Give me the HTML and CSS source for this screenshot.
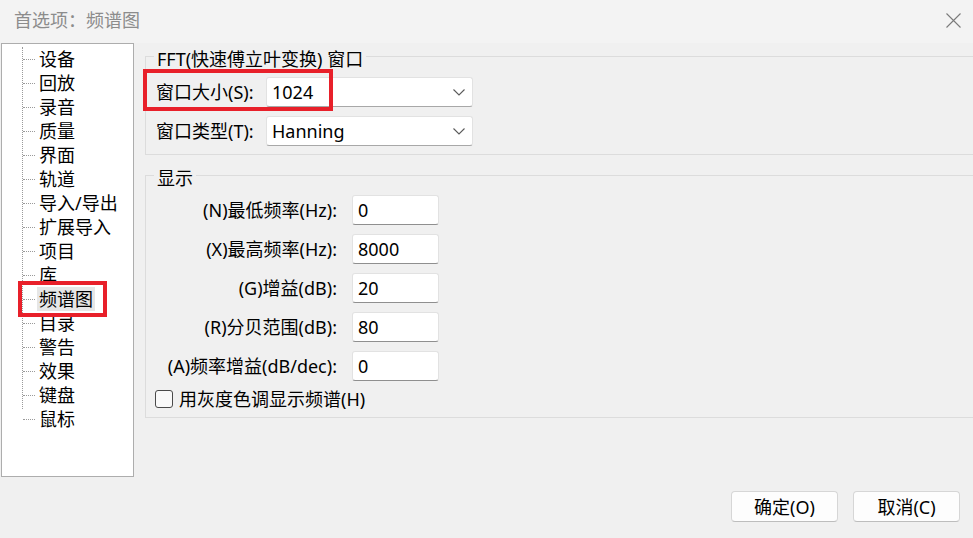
FILE: index.html
```html
<!DOCTYPE html>
<html lang="zh-CN">
<head>
<meta charset="utf-8">
<title>首选项：频谱图</title>
<link rel="stylesheet" href="styles.css">
</head>
<body>
<div class="titlebar">
  <span class="title">首选项：频谱图</span>
  <svg class="close" width="15" height="15" viewBox="0 0 15 15"><path d="M0.5 0.5 L14.5 14.5 M14.5 0.5 L0.5 14.5" stroke="#7a7a7a" stroke-width="1.1" fill="none"/></svg>
</div>
<div class="main">
  <div class="tree">
    <div class="trunk">
      <ul class="items">
        <li><span class="twig"></span><span class="label">设备</span></li>
        <li><span class="twig"></span><span class="label">回放</span></li>
        <li><span class="twig"></span><span class="label">录音</span></li>
        <li><span class="twig"></span><span class="label">质量</span></li>
        <li><span class="twig"></span><span class="label">界面</span></li>
        <li><span class="twig"></span><span class="label">轨道</span></li>
        <li><span class="twig"></span><span class="label">导入/导出</span></li>
        <li><span class="twig"></span><span class="label">扩展导入</span></li>
        <li><span class="twig"></span><span class="label">项目</span></li>
        <li><span class="twig"></span><span class="label">库</span></li>
        <li><span class="twig"></span><span class="label selected">频谱图</span></li>
        <li><span class="twig"></span><span class="label">目录</span></li>
        <li><span class="twig"></span><span class="label">警告</span></li>
        <li><span class="twig"></span><span class="label">效果</span></li>
        <li><span class="twig"></span><span class="label">键盘</span></li>
        <li><span class="twig"></span><span class="label">鼠标</span></li>
      </ul>
    </div>
  </div>
  <div class="panel">
    <div class="group group-fft">
      <div class="legend">FFT(快速傅立叶变换) 窗口</div>
      <div class="row first">
        <span class="rlabel">窗口大小(S):</span>
        <div class="combo"><span>1024</span><svg width="12" height="7" viewBox="0 0 12 7"><polyline points="0.5,0.5 6,6 11.5,0.5" fill="none" stroke="#5a5a5a" stroke-width="1.1"/></svg></div>
      </div>
      <div class="row">
        <span class="rlabel">窗口类型(T):</span>
        <div class="combo"><span>Hanning</span><svg width="12" height="7" viewBox="0 0 12 7"><polyline points="0.5,0.5 6,6 11.5,0.5" fill="none" stroke="#5a5a5a" stroke-width="1.1"/></svg></div>
      </div>
    </div>
    <div class="group group-display">
      <div class="legend">显示</div>
      <div class="grid">
        <span class="glabel">(N)最低频率(Hz):</span><div class="field">0</div>
        <span class="glabel">(X)最高频率(Hz):</span><div class="field">8000</div>
        <span class="glabel">(G)增益(dB):</span><div class="field">20</div>
        <span class="glabel">(R)分贝范围(dB):</span><div class="field">80</div>
        <span class="glabel">(A)频率增益(dB/dec):</span><div class="field">0</div>
      </div>
      <div class="check"><span class="box"></span><span>用灰度色调显示频谱(H)</span></div>
    </div>
  </div>
</div>
<div class="footer">
  <button class="btn">确定(O)</button>
  <button class="btn">取消(C)</button>
</div>
<div class="mark mark-tree"></div>
<div class="mark mark-size"></div>
</body>
</html>
```
FILE: styles.css
```css
* { box-sizing: border-box; }
html, body { margin: 0; padding: 0; }
body {
  position: relative;
  width: 973px;
  height: 538px;
  overflow: hidden;
  background: #f0f0f0;
  font-family: "Noto Sans", "Noto Sans CJK SC", sans-serif;
  font-size: 18px;
  color: #000;
}
.titlebar {
  height: 43px;
  background: #f3f3f3;
  display: flex;
  align-items: center;
  padding: 0 12px 3px 14px;
}
.title { color: #8c8c8c; line-height: 24px; }
.close { margin-left: auto; }
.main { display: flex; height: 434px; }
.tree {
  width: 133px;
  height: 434px;
  margin-left: 1px;
  background: #fff;
  border: 1px solid #adadad;
  padding: 15px 0 0 20px;
}
.trunk {
  border-left: 1px dotted #9a9a9a;
  height: 362px;
}
.items {
  list-style: none;
  margin: -12px 0 0 0;
  padding: 0;
}
.items li {
  height: 24px;
  display: flex;
  align-items: center;
}
.twig {
  width: 12px;
  height: 0;
  border-top: 1px dotted #9a9a9a;
}
.label {
  margin-left: 2px;
  padding: 0 2px;
  line-height: 24px;
  white-space: nowrap;
}
.label.selected { background: #e6e6e6; }
.panel { margin-left: 11px; padding-top: 13px; flex: 1; }
.group {
  border: 1px solid #dcdcdc;
  border-right: none;
  padding-left: 10px;
}
.legend {
  width: fit-content;
  margin: -10px 0 0 -2px;
  padding: 0 3px;
  background: #f0f0f0;
  line-height: 24px;
  white-space: nowrap;
}
.group-fft { padding-bottom: 8px; }
.row {
  display: flex;
  align-items: center;
  height: 30px;
  margin-top: 9px;
}
.row.first { margin-top: 6px; }
.rlabel { width: 110px; white-space: nowrap; line-height: 24px; }
.combo {
  width: 207px;
  height: 30px;
  background: #fff;
  border: 1px solid #e2e2e2;
  border-bottom-color: #a8a8a8;
  border-radius: 3px;
  display: flex;
  align-items: center;
  justify-content: space-between;
  padding: 0 7px 0 5px;
  line-height: 24px;
}
.group-display { margin-top: 20px; padding-left: 0; padding-bottom: 9px; }
.group-display .legend { margin-left: 8px; }
.grid {
  display: grid;
  grid-template-columns: 191px 87px;
  column-gap: 15px;
  row-gap: 9px;
  margin-top: 5px;
}
.glabel { text-align: right; line-height: 30px; white-space: nowrap; }
.field {
  height: 30px;
  background: #fff;
  border: 1px solid #e2e2e2;
  border-bottom-color: #8f8f8f;
  border-radius: 3px;
  padding-left: 5px;
  line-height: 28px;
}
.check {
  display: flex;
  align-items: center;
  margin: 9px 0 0 9px;
  height: 18px;
  line-height: 24px;
}
.box {
  width: 18px;
  height: 18px;
  border: 1px solid #4a4a4a;
  border-radius: 3px;
  background: #f9f9f9;
  margin-right: 6px;
}
.footer {
  display: flex;
  justify-content: flex-end;
  gap: 15px;
  padding: 14px 13px 0 0;
}
.btn {
  width: 107px;
  height: 31px;
  background: #fdfdfd;
  border: 1px solid #d6d6d6;
  border-bottom-color: #bdbdbd;
  border-radius: 4px;
  font-family: inherit;
  font-size: 18px;
  line-height: 24px;
  color: #000;
  padding: 0;
}
.mark {
  position: absolute;
  border: 4px solid #e8202a;
}
.mark-tree { left: 18px; top: 281px; width: 89px; height: 36px; }
.mark-size { left: 143px; top: 69px; width: 190px; height: 42px; }
```
